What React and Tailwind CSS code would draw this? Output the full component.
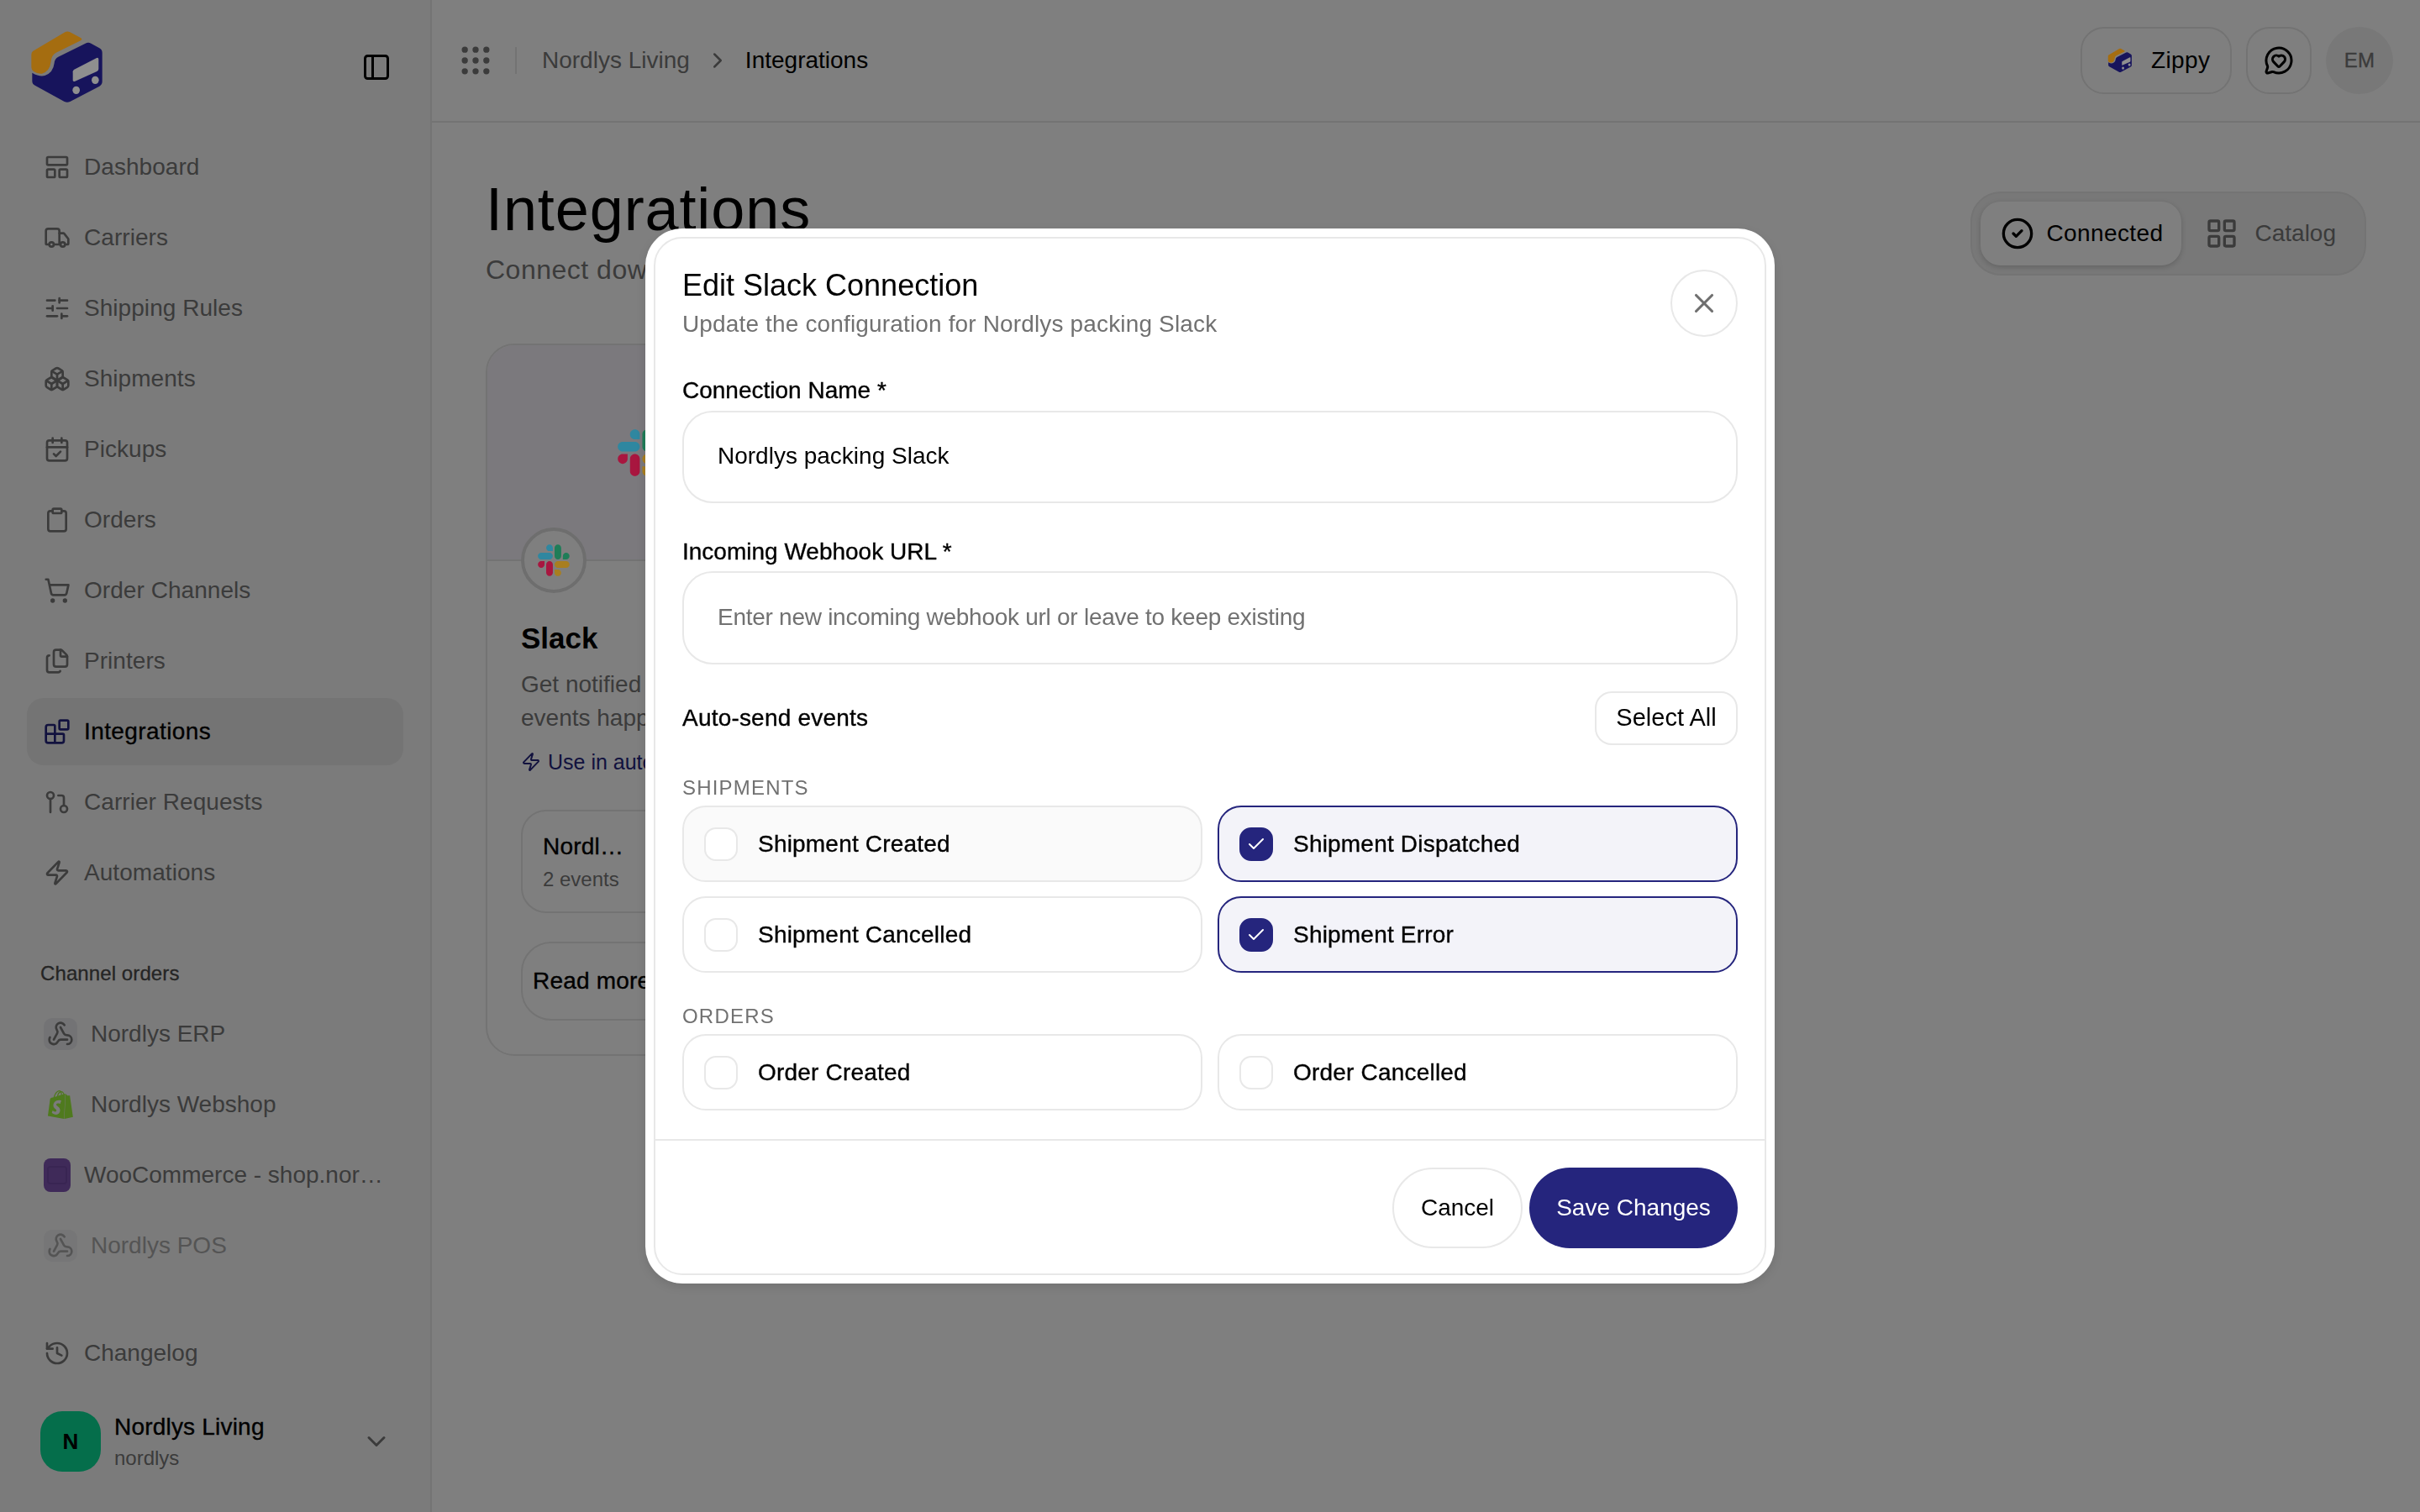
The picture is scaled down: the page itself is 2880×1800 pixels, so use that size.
import React from "react";
import {
  LayoutPanelTop, Truck, SlidersHorizontal, Boxes, CalendarCheck, Clipboard, ShoppingCart, Files, Blocks,
  GitPullRequest, Zap, History, Webhook, ChevronDown, ChevronRight, PanelLeft, Grip, MessageCircleHeart,
  CircleCheck, LayoutGrid, X, Check,
} from "lucide-react";
import { SiShopify } from "react-icons/si";

const med = "[-webkit-text-stroke:0.35px] tracking-[0.2px]";
const medLabel = "[-webkit-text-stroke:0.35px] tracking-[0px]";

function Logo({ className }) {
  return (
    <svg viewBox="45 45 270 270" className={className}>
      <path fill="#a56d10" d="M58 122 L172 55 Q180 50 190 55 L228 75 Q236 80 228 85 L140 128 Q124 136 122 160 Q118 195 90 203 Q75 205 60 195 Q52 190 52 180 L52 135 Q52 126 58 122 Z" />
      <path fill="#17145c" d="M55 200 Q80 215 100 210 Q130 200 134 165 Q135 150 148 143 L245 95 Q255 90 265 95 L295 112 Q305 118 305 128 L305 232 Q305 242 295 248 L190 303 Q180 308 170 303 L65 245 Q55 240 55 230 Z" />
      <path fill="#8f8f8f" d="M205 188 L285 147 Q292 144 292 152 L292 186 Q292 192 286 195 L208 230 Q200 233 200 226 L200 196 Q200 191 205 188 Z" />
      <ellipse cx="212" cy="262" rx="13" ry="14" fill="#8f8f8f" />
      <ellipse cx="280" cy="226" rx="13" ry="14" fill="#8f8f8f" />
    </svg>
  );
}

function Slack({ className }) {
  return (
    <svg viewBox="0 0 125 125" className={className}>
      <path fill="#a8163f" d="M26.5 78.9c0 7.2-5.8 13-13 13s-13-5.8-13-13 5.8-13 13-13h13v13zM33 78.9c0-7.2 5.8-13 13-13s13 5.8 13 13v32.5c0 7.2-5.8 13-13 13s-13-5.8-13-13V78.9z" />
      <path fill="#2f87a0" d="M46 26.7c-7.2 0-13-5.8-13-13s5.8-13 13-13 13 5.8 13 13v13H46zM46 33.3c7.2 0 13 5.8 13 13s-5.8 13-13 13H13.4c-7.2 0-13-5.8-13-13s5.8-13 13-13H46z" />
      <path fill="#1f7d58" d="M98.2 46.3c0-7.2 5.8-13 13-13s13 5.8 13 13-5.8 13-13 13h-13v-13zM91.7 46.3c0 7.2-5.8 13-13 13s-13-5.8-13-13V13.8c0-7.2 5.8-13 13-13s13 5.8 13 13v32.5z" />
      <path fill="#a87e20" d="M78.7 98.5c7.2 0 13 5.8 13 13s-5.8 13-13 13-13-5.8-13-13v-13h13zM78.7 92c-7.2 0-13-5.8-13-13s5.8-13 13-13h32.5c7.2 0 13 5.8 13 13s-5.8 13-13 13H78.7z" />
    </svg>
  );
}

const navItems = [
  [LayoutPanelTop, "Dashboard"], [Truck, "Carriers"], [SlidersHorizontal, "Shipping Rules"], [Boxes, "Shipments"],
  [CalendarCheck, "Pickups"], [Clipboard, "Orders"], [ShoppingCart, "Order Channels"], [Files, "Printers"],
  [Blocks, "Integrations", true], [GitPullRequest, "Carrier Requests"], [Zap, "Automations"],
];

function NavItem({ icon: Icon, label, active }) {
  return (
    <div className={"flex h-[80px] items-center gap-[16px] rounded-[20px] pl-[20px] text-[28px] leading-[36px] " + (active ? "bg-[#e8e8e8] text-black" : "text-[#777777]")}>
      <Icon size={32} strokeWidth={2} className={active ? "text-[#25257d]" : "text-[#777777]"} />
      <span className={active ? "[-webkit-text-stroke:0.3px] tracking-[0.4px]" : "tracking-[0.05px]"}>{label}</span>
    </div>
  );
}

function ChannelHook({ label, dim }) {
  return (
    <div className={"flex h-[80px] items-center gap-[16px] pl-[20px] text-[28px] leading-[36px] text-[#777777] " + (dim ? "opacity-60" : "")}>
      <div className="flex h-[38px] w-[40px] items-center justify-center rounded-[10px] bg-[#e6e6ea]">
        <Webhook size={32} strokeWidth={2} />
      </div>
      <span>{label}</span>
    </div>
  );
}

function Sidebar() {
  return (
    <aside className="flex h-full w-[514px] shrink-0 flex-col border-r-2 border-[#e8e8e8] bg-[#f6f6f6]">
      <div className="flex h-[159px] shrink-0 items-center justify-between pl-[35px] pr-[46px]">
        <Logo className="relative z-[45] h-[90px] w-[90px]" />
        <PanelLeft size={36} strokeWidth={2} className="text-black" />
      </div>
      <nav className="flex flex-col gap-[4px] px-[32px]">
        {navItems.map(([icon, label, active]) => (
          <NavItem key={label} icon={icon} label={label} active={active} />
        ))}
      </nav>
      <div className="mt-[64px] pl-[48px] text-[24px] leading-[32px] tracking-[0.1px] text-[#4a4a4a] [-webkit-text-stroke:0.3px]">Channel orders</div>
      <div className="mt-[16px] flex flex-col gap-[4px] px-[32px]">
        <ChannelHook label="Nordlys ERP" />
        <div className="flex h-[80px] items-center gap-[16px] pl-[20px] text-[28px] leading-[36px] text-[#777777]">
          <div className="flex h-[38px] w-[40px] items-center justify-center">
            <SiShopify size={34} className="relative z-[45] text-[#4f7a1e]" />
          </div>
          <span>Nordlys Webshop</span>
        </div>
        <div className="flex h-[80px] items-center gap-[16px] pl-[20px] pr-[18px] text-[28px] leading-[36px] text-[#777777]">
          <div className="flex h-[40px] w-[32px] shrink-0 items-center justify-center rounded-[8px] bg-[#7f54b3]">
            <div className="h-[22px] w-[24px] rounded-[4px] border-2 border-[#734aa6]" />
          </div>
          <span className="truncate">WooCommerce - shop.nordlysliving.com</span>
        </div>
        <ChannelHook label="Nordlys POS" dim />
      </div>
      <div className="mt-auto px-[32px] pb-[47px]">
        <div className="flex h-[80px] items-center gap-[16px] pl-[20px] text-[28px] leading-[36px] text-[#777777]">
          <History size={32} strokeWidth={2} />
          <span>Changelog</span>
        </div>
        <div className="mt-[28px] flex items-center justify-between pl-[16px] pr-[14px]">
          <div className="flex items-center gap-[16px]">
            <div className="flex h-[72px] w-[72px] items-center justify-center rounded-[26px] bg-[#0bdc97] text-[26px] font-bold text-black">N</div>
            <div className="pt-[2px]">
              <div className={"text-[28px] leading-[36px] text-black " + med}>Nordlys Living</div>
              <div className="mt-[2px] text-[24px] leading-[34px] text-[#777777]">nordlys</div>
            </div>
          </div>
          <ChevronDown size={36} strokeWidth={2} className="text-[#777777]" />
        </div>
      </div>
    </aside>
  );
}

function TopBar() {
  return (
    <header className="flex h-[146px] shrink-0 items-center justify-between border-b-2 border-[#e6e6e6] pl-[30px] pr-[32px]">
      <div className="flex items-center text-[28px] leading-[36px]">
        <Grip size={44} strokeWidth={2} className="text-[#777777]" />
        <div className="ml-[25px] h-[32px] w-[2px] bg-[#e6e6e6]" />
        <span className="mb-[1px] ml-[30px] text-[#777777]">Nordlys Living</span>
        <ChevronRight size={30} strokeWidth={2} className="ml-[18px] text-[#777777]" />
        <span className="mb-[1px] ml-[18px] text-black">Integrations</span>
      </div>
      <div className="flex items-center gap-[17px]">
        <div className="flex h-[80px] w-[180px] items-center gap-[22px] rounded-[28px] border-2 border-[#e6e6e6] pl-[30px] text-[28px] leading-[36px] text-black">
          <Logo className="relative z-[45] h-[30px] w-[30px]" />
          <span className="tracking-[0.4px]">Zippy</span>
        </div>
        <div className="flex h-[80px] w-[78px] items-center justify-center rounded-[28px] border-2 border-[#e6e6e6]">
          <MessageCircleHeart size={36} strokeWidth={2} className="text-black" />
        </div>
        <div className={"flex h-[80px] w-[80px] items-center justify-center rounded-full bg-[#f0f0f0] text-[24px] text-[#777777] " + med}>EM</div>
      </div>
    </header>
  );
}

function Content() {
  return (
    <div className="px-[64px] pt-[63px]">
      <div className="flex items-center justify-between">
        <div>
          <h1 className="text-[72px] leading-[80px] tracking-[0.9px] text-black">Integrations</h1>
          <p className="mt-[10px] text-[32px] leading-[44px] tracking-[0.5px] text-[#777777]">Connect downstream tools to automate your workflows</p>
        </div>
        <div className="mt-[3px] flex h-[100px] items-stretch gap-[4px] rounded-[36px] border-2 border-[#e8e8e8] bg-[#f0f0f0] p-[10px] text-[28px] leading-[36px]">
          <div className="flex items-center gap-[14px] rounded-[24px] bg-white pl-[24px] pr-[22px] text-black shadow-[0_2px_6px_rgba(0,0,0,0.18)]">
            <CircleCheck size={40} strokeWidth={2} />
            <span className="tracking-[0.4px]">Connected</span>
          </div>
          <div className="flex items-center gap-[19px] rounded-[24px] px-[24px] text-[#777777]">
            <LayoutGrid size={40} strokeWidth={2} />
            <span>Catalog</span>
          </div>
        </div>
      </div>
      <div className="mt-[66px] w-[370px] rounded-[34px] border-2 border-[#e6e6e6]">
        <div className="relative flex h-[257px] items-center justify-center rounded-t-[32px] border-b-2 border-[#e6e6e6] bg-[#f7f3fa]">
          <Slack className="relative z-[45] h-[56px] w-[56px]" />
          <div className="absolute left-[40px] top-[217px] flex h-[78px] w-[78px] items-center justify-center rounded-full border-4 border-[#dcdcdc] bg-white">
            <Slack className="relative z-[45] h-[38px] w-[38px]" />
          </div>
        </div>
        <div className="pb-[40px] pl-[40px] pr-[24px] pt-[70px]">
          <h3 className="text-[35px] font-bold leading-[44px] text-black">Slack</h3>
          <p className="mt-[13px] text-[28px] leading-[40px] text-[#777777]">Get notified when key events happen</p>
          <div className="mt-[14px] flex items-center gap-[8px] whitespace-nowrap text-[25px] leading-[36px] text-[#25257d]">
            <Zap size={24} strokeWidth={2} />
            <span>Use in automations</span>
          </div>
          <div className="mt-[39px] h-[123px] rounded-[30px] border-2 border-[#e6e6e6] pl-[24px] pt-[24px]">
            <div className={"text-[28px] leading-[36px] text-black " + med}>Nordl…</div>
            <div className="mt-[4px] text-[24px] leading-[34px] text-[#777777]">2 events</div>
          </div>
          <div className="mt-[34px] flex h-[94px] items-center whitespace-nowrap rounded-[36px] border-2 border-[#e6e6e6] pl-[12px] text-[28px] text-black">
            <span className={med}>Read more</span>
          </div>
        </div>
      </div>
    </div>
  );
}

function EventCard({ label, checked, hover }) {
  return (
    <div className={"flex h-[91px] items-center gap-[24px] rounded-[28px] border-2 pl-[24px] " + (checked ? "border-[#25257d] bg-[#f3f3f9]" : hover ? "border-[#e8e8e8] bg-[#fafafa]" : "border-[#e8e8e8] bg-white")}>
      <div className={"flex h-[40px] w-[40px] items-center justify-center rounded-[14px] border-2 " + (checked ? "border-[#25257d] bg-[#25257d]" : "border-[#e8e8e8] bg-white")}>
        {checked && <Check size={24} strokeWidth={2} className="text-white" />}
      </div>
      <span className={"text-[28px] leading-[36px] text-black " + med}>{label}</span>
    </div>
  );
}

function Modal() {
  return (
    <div className="fixed inset-0 z-50 flex items-center justify-center">
      <div className="w-[1344px] rounded-[44px] bg-white p-[10px] shadow-[0_4px_12px_rgba(0,0,0,0.1)]">
        <div className="rounded-[34px] border-2 border-[#e8e8e8]">
          <div className="px-[32px] pb-[34px] pt-[32px]">
            <div className="flex items-center justify-between">
              <div>
                <h2 className="text-[36px] leading-[48px] text-black">Edit Slack Connection</h2>
                <p className="mt-[2px] text-[28px] leading-[40px] tracking-[0.15px] text-[#717171]">Update the configuration for Nordlys packing Slack</p>
              </div>
              <button className="flex h-[80px] w-[80px] items-center justify-center rounded-full border-2 border-[#e8e8e8] text-[#6f6f6f]">
                <X size={38} strokeWidth={2} />
              </button>
            </div>
            <label className={"mt-[41px] block text-[28px] leading-[36px] text-black " + medLabel}>Connection Name *</label>
            <input readOnly value="Nordlys packing Slack" className="mt-[6px] block h-[110px] w-full rounded-[36px] border-2 border-[#e8e8e8] pb-[2px] pl-[40px] text-[28px] text-black outline-none" />
            <label className={"mt-[40px] block text-[28px] leading-[36px] text-black " + medLabel}>Incoming Webhook URL *</label>
            <input readOnly placeholder="Enter new incoming webhook url or leave to keep existing" className="mt-[5px] block h-[111px] w-full rounded-[36px] border-2 border-[#e8e8e8] pb-[2px] pl-[40px] text-[28px] tracking-[-0.27px] text-black outline-none placeholder:text-[#717171]" />
            <div className="mt-[32px] flex items-center justify-between">
              <span className={"text-[28px] leading-[36px] text-black " + med}>Auto-send events</span>
              <button className="flex h-[64px] w-[170px] items-center justify-center rounded-[20px] border-2 border-[#e8e8e8] text-[29px] text-black">Select All</button>
            </div>
            <div className="mt-[35px] text-[24px] leading-[32px] tracking-[1.2px] text-[#717171]">SHIPMENTS</div>
            <div className="mt-[5px] grid grid-cols-2 gap-x-[18px] gap-y-[17px]">
              <EventCard label="Shipment Created" hover />
              <EventCard label="Shipment Dispatched" checked />
              <EventCard label="Shipment Cancelled" />
              <EventCard label="Shipment Error" checked />
            </div>
            <div className="mt-[36px] text-[24px] leading-[32px] tracking-[1.2px] text-[#717171]">ORDERS</div>
            <div className="mt-[5px] grid grid-cols-2 gap-x-[18px] gap-y-[17px]">
              <EventCard label="Order Created" />
              <EventCard label="Order Cancelled" />
            </div>
          </div>
          <div className="flex justify-end gap-[8px] border-t-2 border-[#e8e8e8] px-[32px] pb-[30px] pt-[32px]">
            <button className="flex h-[96px] w-[155px] items-center justify-center rounded-full border-2 border-[#e8e8e8] text-[28px] text-black">Cancel</button>
            <button className="flex h-[96px] w-[248px] items-center justify-center rounded-full bg-[#25257d] text-[28px] text-white">Save Changes</button>
          </div>
        </div>
      </div>
    </div>
  );
}

export default function App() {
  return (
    <div className="flex h-screen w-full overflow-hidden bg-white font-['Liberation_Sans',Arial,sans-serif]">
      <Sidebar />
      <main className="flex min-w-0 flex-1 flex-col">
        <TopBar />
        <Content />
      </main>
      <div className="fixed inset-0 z-40 bg-black/50" />
      <Modal />
    </div>
  );
}
